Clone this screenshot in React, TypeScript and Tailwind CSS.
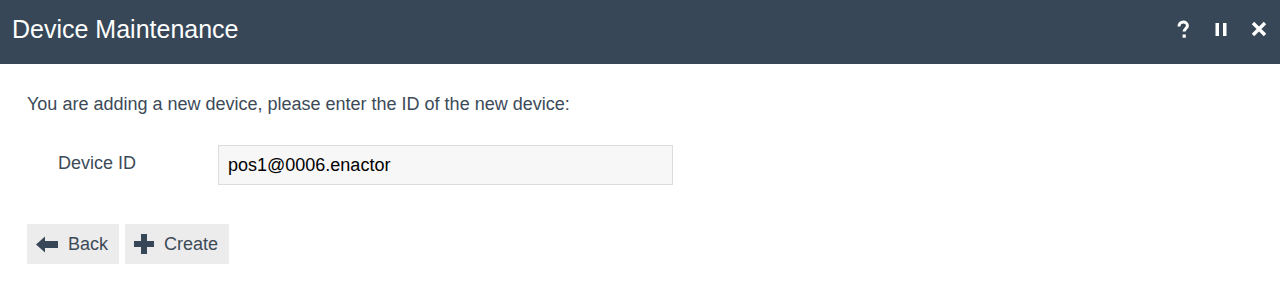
import React from "react";

export default function App() {
  return (
    <div className="w-[1280px] h-[293px] bg-white" style={{ fontFamily: '"Liberation Sans", Arial, sans-serif' }}>
      <div className="h-16 bg-[#374757] flex items-center justify-between pl-3 pr-3">
        <h1 className="text-[25px] text-white leading-none -mt-[5px]">Device Maintenance</h1>
        <div className="flex items-center gap-[20px] text-white -mt-[4px]">
          <svg width="18" height="20" viewBox="0 0 18 20" className="block">
            <path d="M5 6.5 C5 3.5 7 2 9.2 2 C11.6 2 13.4 3.6 13.4 5.8 C13.4 8.3 10.2 8.8 10.2 11.5" fill="none" stroke="white" strokeWidth="3" />
            <rect x="8.6" y="14.5" width="3.2" height="3.2" fill="white" />
          </svg>
          <svg width="18" height="20" viewBox="0 0 18 20" className="block">
            <rect x="3.5" y="3" width="3.5" height="13" fill="white" />
            <rect x="11" y="3" width="3.5" height="13" fill="white" />
          </svg>
          <svg width="18" height="20" viewBox="0 0 18 20" className="block">
            <path d="M3 3 L15 15 M15 3 L3 15" stroke="white" strokeWidth="3.4" />
          </svg>
        </div>
      </div>
      <div className="pl-[27px] pt-[29px]">
        <p className="text-[18px] text-[#3c4a58] leading-[22px]">
          You are adding a new device, please enter the ID of the new device:
        </p>
        <div className="flex items-center mt-[30px]">
          <label className="w-[191px] pl-[31px] text-[18px] text-[#3c4a58] -mt-[4px]">Device ID</label>
          <div className="w-[455px] h-10 bg-[#f7f7f7] border border-[#dcdcdc] flex items-center px-[9px] text-[18px] text-black">
            pos1@0006.enactor
          </div>
        </div>
        <div className="flex gap-[6px] mt-[39px]">
          <button className="h-10 bg-[#ececec] flex items-center pl-[9px] pr-[11px] text-[18px] text-[#3c4a58]">
            <svg width="23" height="17" viewBox="0 0 23 17" className="mr-[9px]">
              <path d="M0 8.5 L9 0.5 L9 5 L22 5 L22 12 L9 12 L9 16.5 Z" fill="#374757" />
            </svg>
            Back
          </button>
          <button className="h-10 bg-[#ececec] flex items-center pl-[9px] pr-[11px] text-[18px] text-[#3c4a58]">
            <svg width="20" height="20" viewBox="0 0 20 20" className="mr-[10px]">
              <path d="M7 0 H13 V7 H20 V13 H13 V20 H7 V13 H0 V7 H7 Z" fill="#374757" />
            </svg>
            Create
          </button>
        </div>
      </div>
    </div>
  );
}
